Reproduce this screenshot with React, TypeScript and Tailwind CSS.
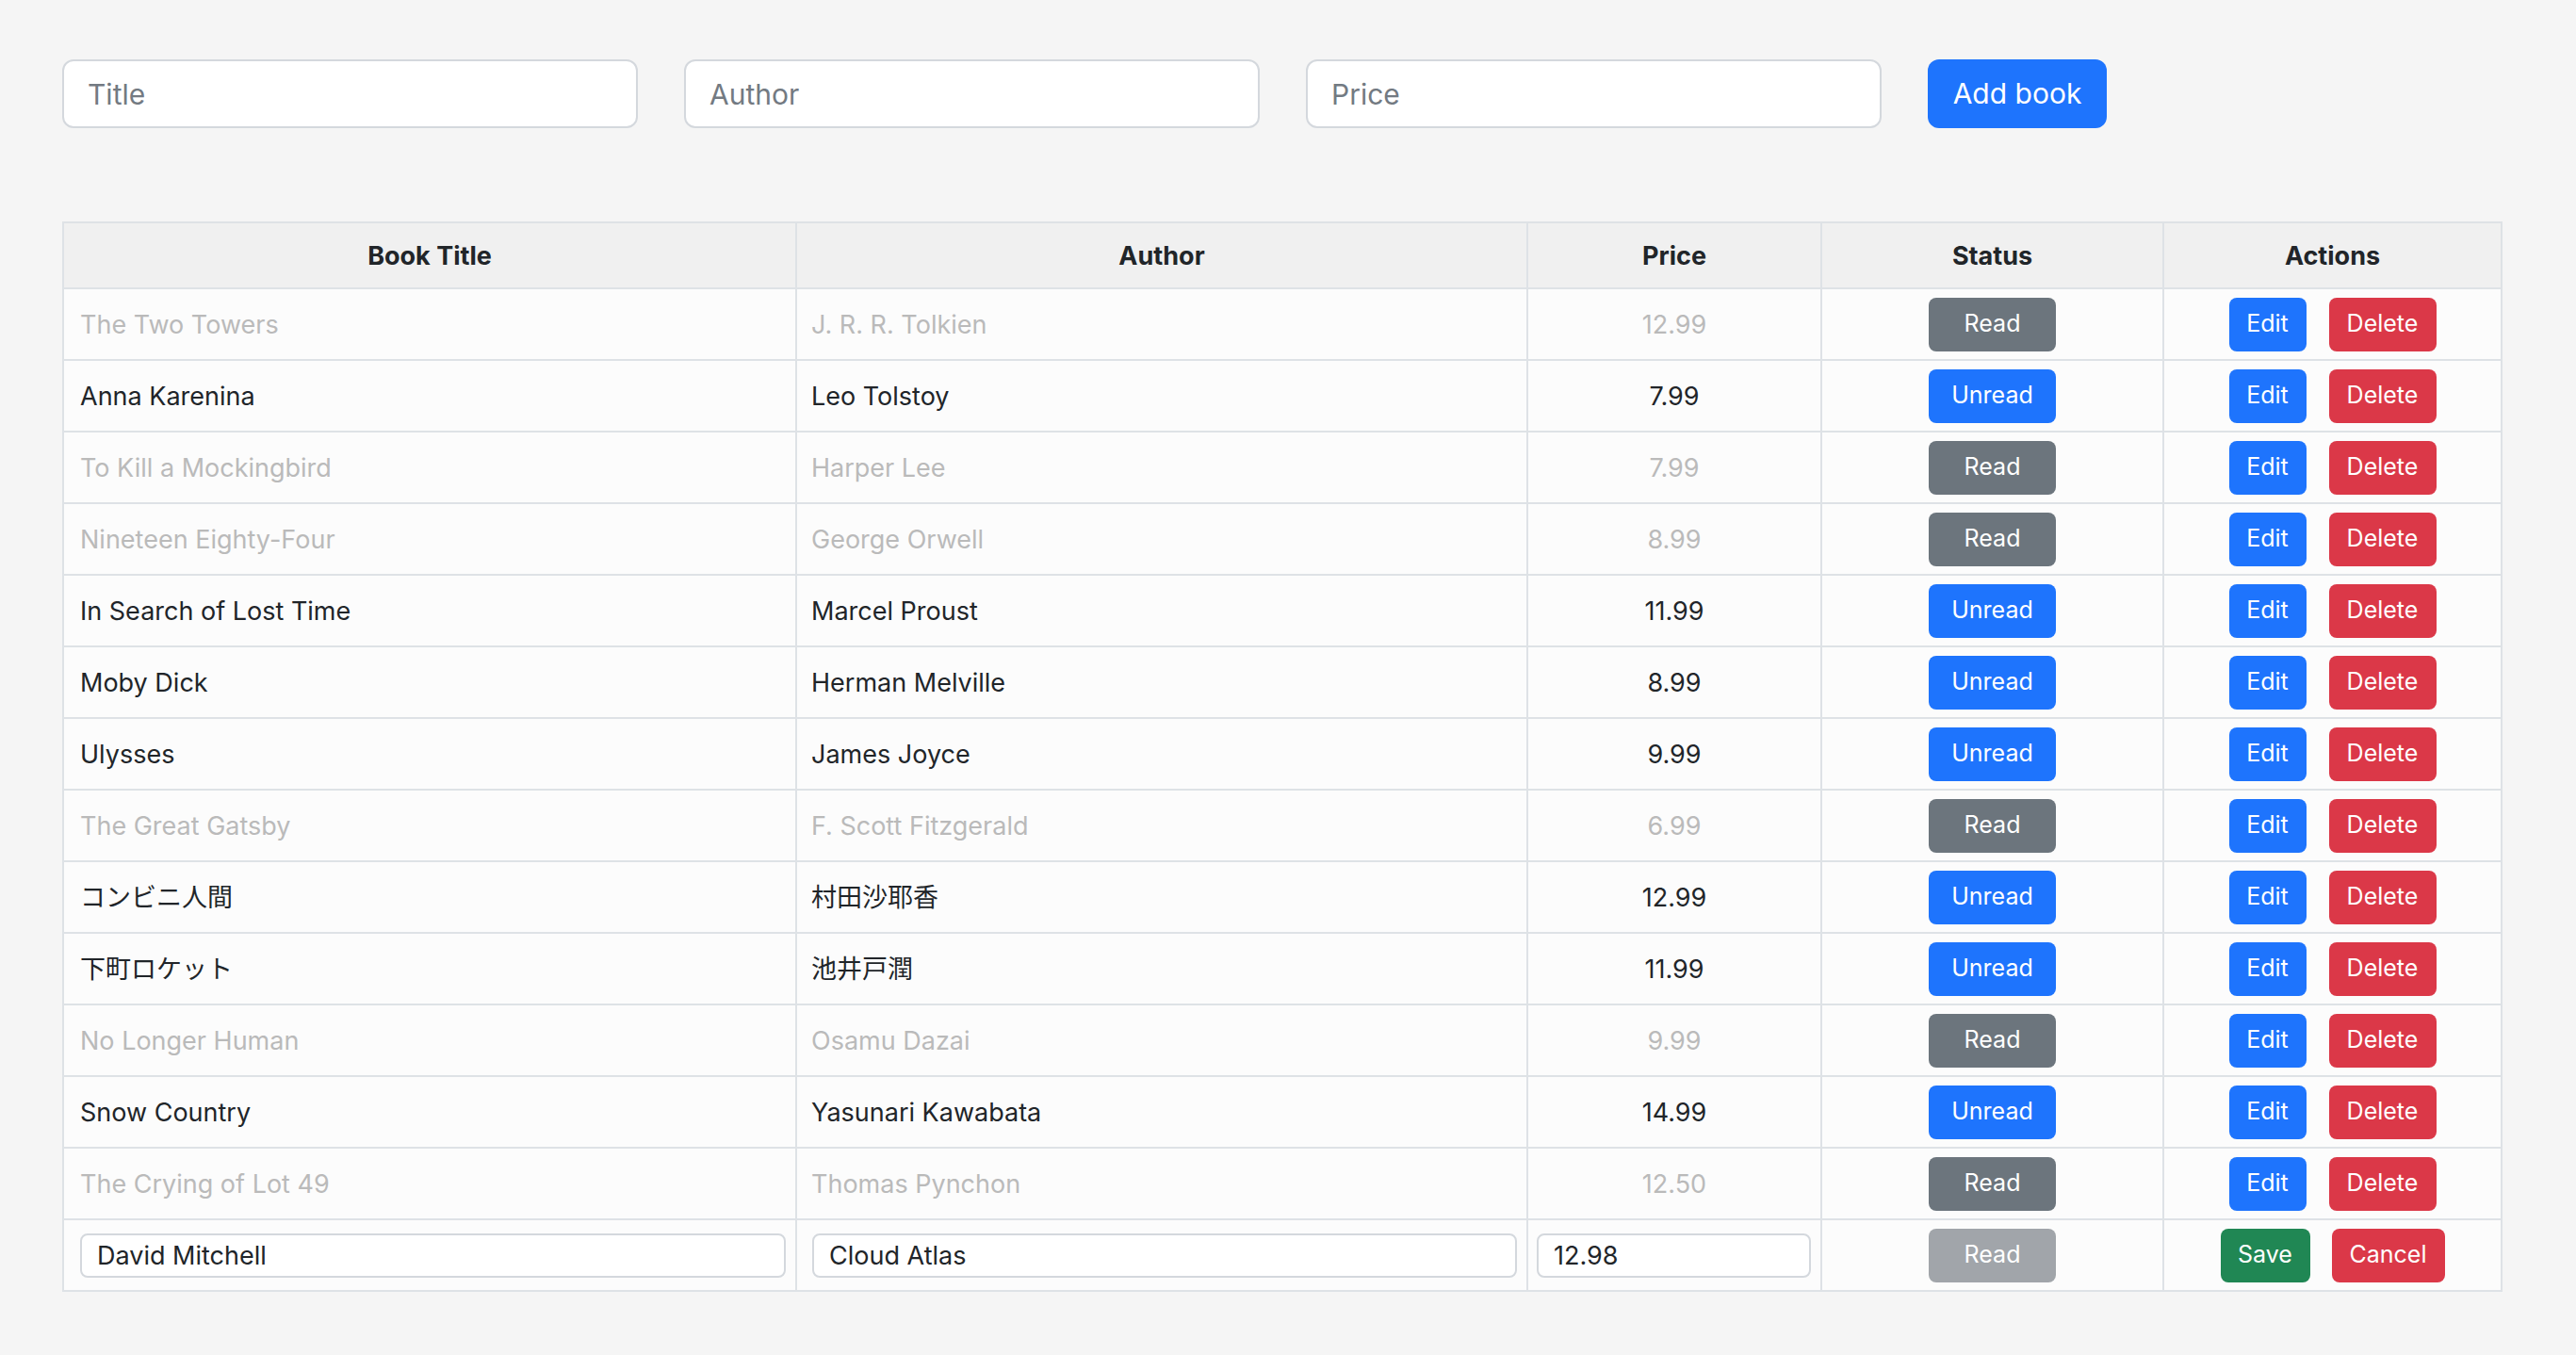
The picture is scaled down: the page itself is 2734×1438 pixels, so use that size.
type Book = { title: string; author: string; price: string; read: boolean };

const books: Book[] = [
  { title: "The Two Towers", author: "J. R. R. Tolkien", price: "12.99", read: true },
  { title: "Anna Karenina", author: "Leo Tolstoy", price: "7.99", read: false },
  { title: "To Kill a Mockingbird", author: "Harper Lee", price: "7.99", read: true },
  { title: "Nineteen Eighty-Four", author: "George Orwell", price: "8.99", read: true },
  { title: "In Search of Lost Time", author: "Marcel Proust", price: "11.99", read: false },
  { title: "Moby Dick", author: "Herman Melville", price: "8.99", read: false },
  { title: "Ulysses", author: "James Joyce", price: "9.99", read: false },
  { title: "The Great Gatsby", author: "F. Scott Fitzgerald", price: "6.99", read: true },
  { title: "コンビニ人間", author: "村田沙耶香", price: "12.99", read: false },
  { title: "下町ロケット", author: "池井戸潤", price: "11.99", read: false },
  { title: "No Longer Human", author: "Osamu Dazai", price: "9.99", read: true },
  { title: "Snow Country", author: "Yasunari Kawabata", price: "14.99", read: false },
  { title: "The Crying of Lot 49", author: "Thomas Pynchon", price: "12.50", read: true },
];

const row = "grid grid-cols-[778px_776px_312px_363px_357px] border-b-2 border-[#dee2e6]";
const cell = "flex items-center border-r-2 border-[#dee2e6]";

function BookRow({ book }: { book: Book }) {
  const text = book.read ? "text-[#bababa]" : "text-[#212529]";
  return (
    <div className={`${row} h-[76px] bg-[#fcfcfc] ${text}`}>
      <div className={`${cell} pl-[17px] pt-[3px]`}>{book.title}</div>
      <div className={`${cell} pl-[15px] pt-[3px]`}>{book.author}</div>
      <div className={`${cell} justify-center pt-[3px]`}>{book.price}</div>
      <div className={`${cell} justify-center`}>
        {book.read ? (
          <button className="w-[135px] h-[57px] rounded-[8px] bg-[#6c757d] text-white text-[25px]">Read</button>
        ) : (
          <button className="w-[135px] h-[57px] rounded-[8px] bg-[#1e74fd] text-white text-[25px]">Unread</button>
        )}
      </div>
      <div className="flex items-center justify-center gap-[24px]">
        <button className="w-[82px] h-[57px] rounded-[8px] bg-[#1e74fd] text-white text-[25px]">Edit</button>
        <button className="w-[114px] h-[57px] rounded-[8px] bg-[#db3848] text-white text-[25px]">Delete</button>
      </div>
    </div>
  );
}

export default function App() {
  return (
    <div className="min-h-screen bg-[#f5f5f5] pt-[63px] pl-[66px] text-[27px] text-[#212529] font-['Inter','Noto_Sans_CJK_JP',sans-serif]">
      <div className="flex gap-[49px]">
        <input placeholder="Title" className="w-[611px] h-[73px] rounded-[12px] border-2 border-[#d4d8dd] bg-white px-[25px] text-[30px] placeholder:text-[#737a82] outline-none" />
        <input placeholder="Author" className="w-[611px] h-[73px] rounded-[12px] border-2 border-[#d4d8dd] bg-white px-[25px] text-[30px] placeholder:text-[#737a82] outline-none" />
        <input placeholder="Price" className="w-[611px] h-[73px] rounded-[12px] border-2 border-[#d4d8dd] bg-white px-[25px] text-[30px] placeholder:text-[#737a82] outline-none" />
        <button className="w-[190px] h-[73px] rounded-[12px] bg-[#1e74fd] text-white text-[30px]">Add book</button>
      </div>

      <div className="mt-[99px] w-[2590px] border-2 border-[#dee2e6]">
        <div className={`${row} h-[70px] bg-[#f0f0f0] font-bold`}>
          <div className={`${cell} justify-center pt-[3px]`}>Book Title</div>
          <div className={`${cell} justify-center pt-[3px]`}>Author</div>
          <div className={`${cell} justify-center pt-[3px]`}>Price</div>
          <div className={`${cell} justify-center pt-[3px]`}>Status</div>
          <div className="flex items-center justify-center pt-[3px]">Actions</div>
        </div>

        {books.map((b) => (
          <BookRow key={b.title} book={b} />
        ))}

        <div className="grid grid-cols-[778px_776px_312px_363px_357px] h-[74px] bg-[#fcfcfc]">
          <div className={`${cell} pl-[17px] pr-[10px]`}>
            <input defaultValue="David Mitchell" className="w-full h-[47px] rounded-[8px] border-2 border-[#d4d8dd] bg-white px-[16px] text-[27px] outline-none" />
          </div>
          <div className={`${cell} pl-[16px] pr-[10px]`}>
            <input defaultValue="Cloud Atlas" className="w-full h-[47px] rounded-[8px] border-2 border-[#d4d8dd] bg-white px-[16px] text-[27px] outline-none" />
          </div>
          <div className={`${cell} pl-[9px] pr-[10px]`}>
            <input defaultValue="12.98" className="w-full h-[47px] rounded-[8px] border-2 border-[#d4d8dd] bg-white px-[16px] text-[27px] outline-none" />
          </div>
          <div className={`${cell} justify-center`}>
            <button disabled className="w-[135px] h-[57px] rounded-[8px] bg-[#a1a5aa] text-white text-[25px]">Read</button>
          </div>
          <div className="flex items-center justify-center gap-[23px]">
            <button className="w-[95px] h-[57px] rounded-[8px] bg-[#208754] text-white text-[25px]">Save</button>
            <button className="w-[120px] h-[57px] rounded-[8px] bg-[#db3848] text-white text-[25px]">Cancel</button>
          </div>
        </div>
      </div>
    </div>
  );
}
